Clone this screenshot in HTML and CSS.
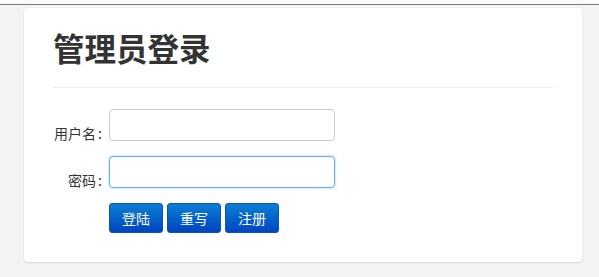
FILE: index.html
```html
<!DOCTYPE html>
<html lang="zh-CN">
<head>
<meta charset="utf-8">
<title>管理员登录</title>
<link rel="stylesheet" href="styles.css">
</head>
<body>
<div class="topbar"></div>
<div class="page">
  <div class="card">
    <h1 class="title">管理员登录</h1>
    <hr class="divider">
    <form class="form">
      <div class="row">
        <label class="label" for="u">用户名<span class="colon">:</span></label>
        <input class="input" id="u" type="text">
      </div>
      <div class="row">
        <label class="label" for="p">密码<span class="colon">:</span></label>
        <input class="input focus" id="p" type="password">
      </div>
      <div class="actions">
        <button type="button" class="btn">登陆</button>
        <button type="button" class="btn">重写</button>
        <button type="button" class="btn">注册</button>
      </div>
    </form>
  </div>
</div>
</body>
</html>
```
FILE: styles.css
```css
html, body {
  margin: 0;
  padding: 0;
}
body {
  background: #f3f3f3;
  font-family: "Noto Sans CJK SC", "Noto Sans", sans-serif;
  color: #333;
  height: 277px;
  overflow: hidden;
}
.topbar {
  height: 4px;
  background: #fafafa;
  border-bottom: 1px solid #7a7a7a;
}
.page {
  padding: 3px 17px 0 24px;
}
.card {
  background: #fff;
  border-radius: 4px;
  box-shadow: 0 1px 2px rgba(0,0,0,0.12);
  height: 254px;
  box-sizing: border-box;
  padding: 16px 29px 0 29px;
}
.title {
  margin: 0;
  font-size: 31.5px;
  font-weight: bold;
  line-height: 46px;
  color: #333;
}
.divider {
  border: 0;
  border-top: 1px solid #eee;
  margin: 17px 0 21px 0;
}
.form {
  display: flex;
  flex-direction: column;
}
.row {
  display: flex;
  align-items: flex-end;
  margin-bottom: 15px;
}
.label {
  width: 50px;
  text-align: right;
  font-size: 14px;
  line-height: 14px;
  padding-bottom: 1px;
  color: #333;
  white-space: nowrap;
}
.colon {
  padding-left: 2px;
  padding-right: 1px;
}
.input {
  margin-left: 6px;
  width: 226px;
  height: 32px;
  box-sizing: border-box;
  border: 1px solid #ccc;
  border-radius: 4px;
  background: #fff;
  outline: none;
  padding: 4px 8px;
  font-size: 14px;
}
.input.focus {
  border-color: #66afe9;
  box-shadow: 0 0 3px rgba(102,175,233,0.6);
}
.actions {
  display: flex;
  gap: 4px;
  padding-left: 56px;
}
.btn {
  width: 54px;
  height: 30px;
  border: 1px solid #0a55b0;
  border-radius: 3px;
  background: linear-gradient(#0b7fd3, #0045c2);
  color: #fff;
  font-family: "Noto Sans CJK SC", "Noto Sans", sans-serif;
  font-size: 14px;
  padding: 0;
  cursor: pointer;
}
```
